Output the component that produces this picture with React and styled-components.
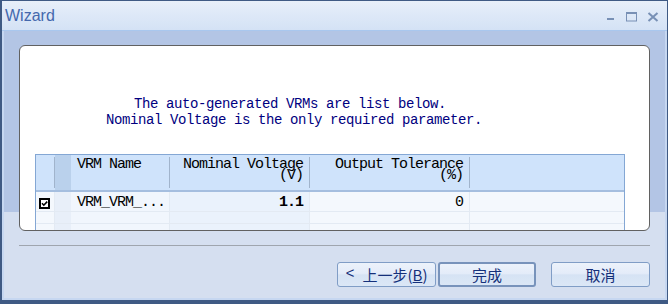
import React from "react";
import styled, { createGlobalStyle } from "styled-components";

const GlobalStyle = createGlobalStyle`
  html, body { margin: 0; padding: 0; background: #ffffff; }
  #root { width: 668px; height: 304px; }
`;

const Window = styled.div`
  box-sizing: border-box;
  width: 668px;
  height: 304px;
  display: flex;
  flex-direction: column;
  border-style: solid;
  border-color: #3f5a84;
  border-width: 1px 1px 4px 2px;
  background: #c6d7f1;
  overflow: hidden;
`;

const TitleBar = styled.div`
  box-sizing: border-box;
  height: 30px;
  flex: none;
  display: flex;
  align-items: center;
  justify-content: space-between;
  padding: 0 8px 0 3px;
  background: linear-gradient(to bottom, #e8eff9 0%, #e0eaf8 35%, #d4e2f5 100%);
  border-bottom: 1px solid #a9c7ee;
`;

const Title = styled.span`
  font-family: "Liberation Sans", Arial, sans-serif;
  font-size: 16px;
  color: #4468ad;
`;

const Controls = styled.div`
  display: flex;
  gap: 9px;
  align-self: flex-start;
  margin-top: 11px;
`;

const Body = styled.div`
  flex: 1;
  display: flex;
  flex-direction: column;
  margin: 0 2px 2px 2px;
  padding: 14px 15px 0 15px;
  background: linear-gradient(to bottom, #b3c5e5 0, #b3c5e5 181px, #d5dff0 181px);
`;

const Panel = styled.div`
  box-sizing: border-box;
  height: 186px;
  flex: none;
  background: #ffffff;
  border: 1px solid #616161;
  border-radius: 6px;
  overflow: hidden;
  padding: 0 15px;
`;

const Message = styled.div`
  margin-top: 50px;
  padding-right: 81px;
  text-align: center;
  font-family: "Liberation Mono", "Courier New", monospace;
  font-size: 14px;
  letter-spacing: -0.4px;
  line-height: 16px;
  color: #000080;
`;

const MessageLine = styled.div`
  white-space: pre;
`;

const Table = styled.div`
  margin-top: 26px;
  width: 590px;
  box-sizing: border-box;
  border: 1px solid #84a7d4;
  border-bottom: none;
  font-family: "Liberation Mono", "Courier New", monospace;
  font-size: 15px;
  letter-spacing: -1px;
  color: #000000;
`;

const HeaderRow = styled.div`
  display: flex;
  height: 35px;
  background: #cfe3fb;
  border-bottom: 2px solid #a5bedf;
`;

const HeaderCell = styled.div`
  box-sizing: border-box;
  flex: ${(p) => (p.$grow ? "1" : `none`)};
  width: ${(p) => (p.$w ? `${p.$w}px` : "auto")};
  margin: 2px 0;
  padding: 2px 6px 0 6px;
  line-height: 11px;
  text-align: ${(p) => (p.$right ? "right" : "left")};
  border-right: ${(p) => (p.$grow ? "none" : "1px solid #a1b4cc")};
  white-space: pre;
`;

const RowHeadCell = styled.div`
  flex: none;
  width: 16px;
  background: ${(p) => p.$bg};
`;

const Row = styled.div`
  display: flex;
  height: ${(p) => p.$h}px;
  border-bottom: 1px solid #e3eaf3;
`;

const Cell = styled.div`
  box-sizing: border-box;
  flex: ${(p) => (p.$grow ? "1" : "none")};
  width: ${(p) => (p.$w ? `${p.$w}px` : "auto")};
  padding: 2px 6px 0 6px;
  line-height: 18px;
  text-align: ${(p) => (p.$right ? "right" : "left")};
  font-weight: ${(p) => (p.$bold ? 700 : 400)};
  background: ${(p) => p.$bg || "#f4f8fd"};
  border-right: ${(p) => (p.$grow ? "none" : "1px solid #e3eaf3")};
  white-space: pre;
`;

const CheckCell = styled.div`
  box-sizing: border-box;
  flex: none;
  width: 19px;
  display: flex;
  justify-content: center;
  align-items: flex-start;
  padding-top: 6px;
  padding-right: 1px;
  background: #f4f8fd;
  border-right: 1px solid #e3eaf3;
`;

const Separator = styled.div`
  margin-top: 14px;
  border-top: 1px solid #9fa5ae;
`;

const ButtonRow = styled.div`
  margin-top: 16px;
  display: flex;
  justify-content: flex-end;
`;

const Button = styled.button`
  box-sizing: border-box;
  width: ${(p) => p.$w}px;
  height: 25px;
  margin-left: ${(p) => p.$gap}px;
  padding: 0;
  border: ${(p) => (p.$default ? "2px solid #7893bb" : "1px solid #809dc6")};
  border-radius: 3px;
  background: linear-gradient(
    to bottom,
    #ecf2fb 0%,
    #e4ecf9 45%,
    #d6e3f4 52%,
    #dbe7f6 100%
  );
  font-family: "Noto Sans CJK SC", "Liberation Sans", sans-serif;
  font-size: 15px;
  line-height: 1;
  color: #15307a;
  display: flex;
  align-items: center;
  justify-content: center;
`;

const BackArrow = styled.span`
  margin-right: 8px;
  font-family: "Liberation Mono", monospace;
`;

const Underlined = styled.span`
  text-decoration: underline;
`;

const IconColor = "#7890b5";

function MinIcon() {
  return (
    <svg width="12" height="12" viewBox="0 0 12 12">
      <rect x="2" y="6" width="7" height="2" fill={IconColor} />
    </svg>
  );
}

function MaxIcon() {
  return (
    <svg width="12" height="12" viewBox="0 0 12 12">
      <rect x="0.5" y="0.5" width="10" height="8.5" fill="none" stroke={IconColor} strokeWidth="1" />
      <line x1="0.5" y1="1.5" x2="10.5" y2="1.5" stroke={IconColor} strokeWidth="1" />
    </svg>
  );
}

function CloseIcon() {
  return (
    <svg width="12" height="12" viewBox="0 0 12 12">
      <path d="M1.5 1 L10.5 9 M10.5 1 L1.5 9" stroke={IconColor} strokeWidth="2" fill="none" />
    </svg>
  );
}

function CheckBox() {
  return (
    <svg width="11" height="11" viewBox="0 0 11 11">
      <rect x="1" y="1" width="9" height="9" fill="#ffffff" stroke="#000000" strokeWidth="2" />
      <path d="M3 5.3 L4.8 7.2 L8.2 3.6" stroke="#000000" strokeWidth="1.6" fill="none" />
    </svg>
  );
}

export default function App() {
  return (
    <>
      <GlobalStyle />
      <Window>
        <TitleBar>
          <Title>Wizard</Title>
          <Controls>
            <MinIcon />
            <MaxIcon />
            <CloseIcon />
          </Controls>
        </TitleBar>
        <Body>
          <Panel>
            <Message>
              <MessageLine>{"The auto-generated VRMs are list below.\u00a0"}</MessageLine>
              <MessageLine>Nominal Voltage is the only required parameter.</MessageLine>
            </Message>
            <Table>
              <HeaderRow>
                <HeaderCell $w={19} />
                <RowHeadCell $bg="#bad1ec" />
                <HeaderCell $w={99}>VRM Name</HeaderCell>
                <HeaderCell $w={140} $right>
                  {"Nominal Voltage\n(V)"}
                </HeaderCell>
                <HeaderCell $w={160} $right>
                  {"Output Tolerance\n(%)"}
                </HeaderCell>
                <HeaderCell $grow />
              </HeaderRow>
              <Row $h={19}>
                <CheckCell>
                  <CheckBox />
                </CheckCell>
                <RowHeadCell $bg="#e8eff9" />
                <Cell $w={99} $bg="#f1f6fd">VRM_VRM_...</Cell>
                <Cell $w={140} $right $bold $bg="#eaf2fc">1.1</Cell>
                <Cell $w={160} $right>0</Cell>
                <Cell $grow />
              </Row>
              <Row $h={11}>
                <CheckCell />
                <RowHeadCell $bg="#e8eff9" />
                <Cell $w={99} $bg="#f1f6fd" />
                <Cell $w={140} $bg="#eaf2fc" />
                <Cell $w={160} />
                <Cell $grow />
              </Row>
              <Row $h={20}>
                <CheckCell />
                <RowHeadCell $bg="#e8eff9" />
                <Cell $w={99} $bg="#f1f6fd" />
                <Cell $w={140} $bg="#eaf2fc" />
                <Cell $w={160} />
                <Cell $grow />
              </Row>
            </Table>
          </Panel>
          <Separator />
          <ButtonRow>
            <Button $w={99} $gap={0}>
              <BackArrow>&lt;</BackArrow>
              <span>上一步(<Underlined>B</Underlined>)</span>
            </Button>
            <Button $w={98} $gap={2} $default>
              完成
            </Button>
            <Button $w={99} $gap={15}>
              取消
            </Button>
          </ButtonRow>
        </Body>
      </Window>
    </>
  );
}
